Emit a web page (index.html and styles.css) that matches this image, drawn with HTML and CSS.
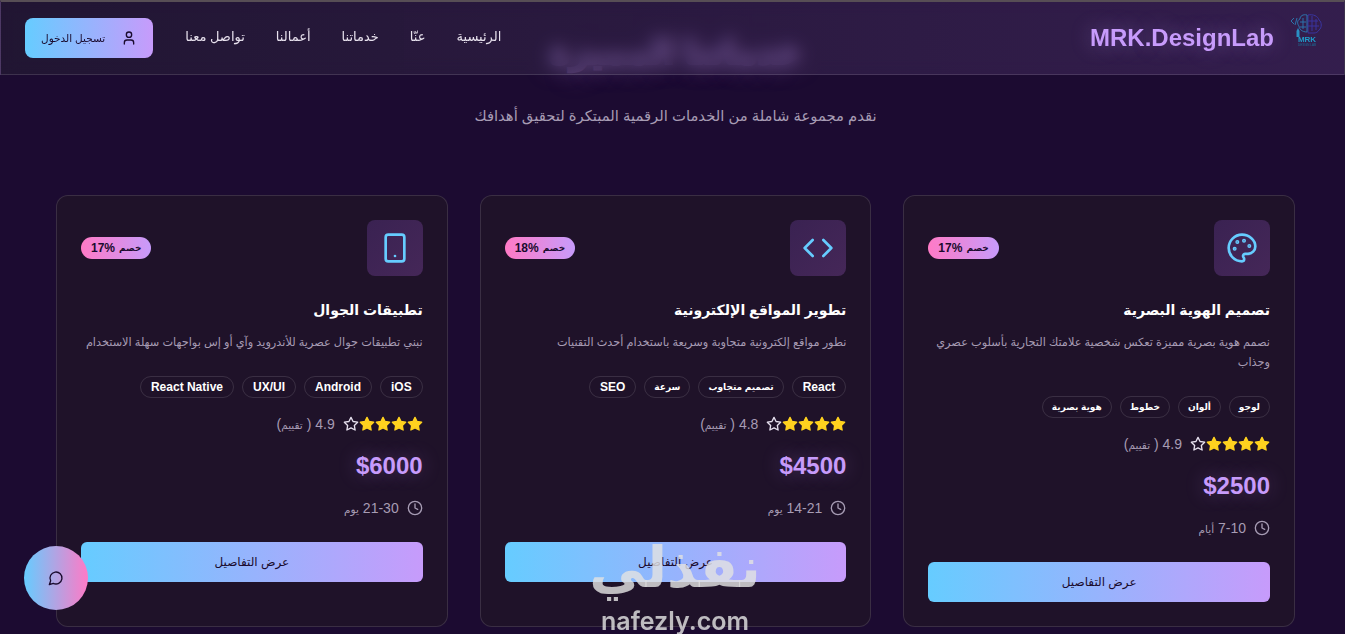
FILE: index.html
```html
<!DOCTYPE html>
<html lang="ar" dir="rtl">
<head>
  <meta charset="UTF-8" />
  <meta name="viewport" content="width=device-width, initial-scale=1.0" />
  <title>MRK.DesignLab | خدماتنا</title>
  <link rel="stylesheet" href="styles.css">
</head>

<body>
  <svg class="sprite" aria-hidden="true">
    <symbol id="i-palette" viewBox="0 0 24 24">
      <circle cx="13.5" cy="6.5" r=".5" fill="currentColor" />
      <circle cx="17.5" cy="10.5" r=".5" fill="currentColor" />
      <circle cx="8.5" cy="7.5" r=".5" fill="currentColor" />
      <circle cx="6.5" cy="12.5" r=".5" fill="currentColor" />
      <path d="M12 2C6.5 2 2 6.5 2 12s4.5 10 10 10c.926 0 1.648-.746 1.648-1.688 0-.437-.18-.835-.437-1.125-.29-.289-.438-.652-.438-1.125a1.64 1.64 0 0 1 1.668-1.668h1.996c3.051 0 5.555-2.503 5.555-5.554C21.965 6.012 17.461 2 12 2z" />
    </symbol>
    <symbol id="i-code" viewBox="0 0 24 24">
      <polyline points="16 18 22 12 16 6" />
      <polyline points="8 6 2 12 8 18" />
    </symbol>
    <symbol id="i-phone" viewBox="0 0 24 24">
      <rect x="5" y="2" width="14" height="20" rx="2" />
      <path d="M12 18h.01" />
    </symbol>
    <symbol id="i-star" viewBox="0 0 24 24">
      <polygon points="12 2 15.09 8.26 22 9.27 17 14.14 18.18 21.02 12 17.77 5.82 21.02 7 14.14 2 9.27 8.91 8.26 12 2" />
    </symbol>
    <symbol id="i-clock" viewBox="0 0 24 24">
      <circle cx="12" cy="12" r="10" />
      <polyline points="12 6 12 12 16 14" />
    </symbol>
    <symbol id="i-user" viewBox="0 0 24 24">
      <path d="M19 21v-2a4 4 0 0 0-4-4H9a4 4 0 0 0-4 4v2" />
      <circle cx="12" cy="7" r="4" />
    </symbol>
    <symbol id="i-chat" viewBox="0 0 24 24">
      <path d="M7.9 20A9 9 0 1 0 4 16.1L2 22Z" />
    </symbol>
  </svg>

  <header class="site-header">
    <a class="brand" href="#">
      <svg class="brand-logo" viewBox="0 0 35 34" aria-hidden="true">
        <g fill="none" stroke="#3a35a0" stroke-width="1">
          <path d="M21 2c5-1 10 1 11 5 3 2 3 8 0 10-1 2-3 3-5 3h-6z" />
          <path d="M25 3v15M29 6v11M21 8h10M21 13h11" />
        </g>
        <g fill="none" stroke="#2c74ac" stroke-width="1">
          <path d="M20 2c-4-1-7 1-7 4-3 1-3 5-1 7 0 3 3 6 8 6z" />
          <path d="M16 5v11M13 9h6M13 14h6" />
          <path d="M4 8l3-3M4 8l3 3M10 5l-2 7" />
        </g>
        <path d="M11 15l-1.5 3v6h3v-6z" fill="#2a8fc4" />
        <text class="brand-logo-text" x="20" y="29" text-anchor="middle">MRK</text>
        <text class="brand-logo-sub" x="20" y="33" text-anchor="middle">DESIGN LAB</text>
      </svg>
      <span class="brand-name">MRK.DesignLab</span>
    </a>
    <div class="header-end">
      <nav class="main-nav">
        <a href="#">الرئيسية</a>
        <a href="#">عنّا</a>
        <a href="#">خدماتنا</a>
        <a href="#">أعمالنا</a>
        <a href="#">تواصل معنا</a>
      </nav>
      <a class="login-button" href="#">
        <svg class="icon"><use href="#i-user" /></svg>
        <span>تسجيل الدخول</span>
      </a>
    </div>
  </header>

  <main class="services">
    <h2 class="services-title">خدماتنا المميزة</h2>
    <p class="services-lead">نقدم مجموعة شاملة من الخدمات الرقمية المبتكرة لتحقيق أهدافك</p>

    <div class="card-grid">
      <article class="card">
        <div class="card-top">
          <div class="card-icon"><svg><use href="#i-palette" /></svg></div>
          <span class="discount"><span class="ar">خصم</span> 17%</span>
        </div>
        <h3>تصميم الهوية البصرية</h3>
        <p class="card-text">نصمم هوية بصرية مميزة تعكس شخصية علامتك التجارية بأسلوب عصري وجذاب</p>
        <ul class="tags">
          <li class="ar">لوجو</li>
          <li class="ar">ألوان</li>
          <li class="ar">خطوط</li>
          <li class="ar">هوية بصرية</li>
        </ul>
        <div class="rating">
          <span class="stars">
            <svg class="star"><use href="#i-star" /></svg>
            <svg class="star"><use href="#i-star" /></svg>
            <svg class="star"><use href="#i-star" /></svg>
            <svg class="star"><use href="#i-star" /></svg>
            <svg class="star empty"><use href="#i-star" /></svg>
          </span>
          <span>4.9 ( <span class="ar">تقييم</span>)</span>
        </div>
        <div class="price">$2500</div>
        <div class="duration">
          <svg class="icon"><use href="#i-clock" /></svg>
          <span>7-10 <span class="ar">أيام</span></span>
        </div>
        <a class="details-button" href="#">عرض التفاصيل</a>
      </article>

      <article class="card">
        <div class="card-top">
          <div class="card-icon"><svg><use href="#i-code" /></svg></div>
          <span class="discount"><span class="ar">خصم</span> 18%</span>
        </div>
        <h3>تطوير المواقع الإلكترونية</h3>
        <p class="card-text">نطور مواقع إلكترونية متجاوبة وسريعة باستخدام أحدث التقنيات</p>
        <ul class="tags">
          <li>React</li>
          <li class="ar">تصميم متجاوب</li>
          <li class="ar">سرعة</li>
          <li>SEO</li>
        </ul>
        <div class="rating">
          <span class="stars">
            <svg class="star"><use href="#i-star" /></svg>
            <svg class="star"><use href="#i-star" /></svg>
            <svg class="star"><use href="#i-star" /></svg>
            <svg class="star"><use href="#i-star" /></svg>
            <svg class="star empty"><use href="#i-star" /></svg>
          </span>
          <span>4.8 ( <span class="ar">تقييم</span>)</span>
        </div>
        <div class="price">$4500</div>
        <div class="duration">
          <svg class="icon"><use href="#i-clock" /></svg>
          <span>14-21 <span class="ar">يوم</span></span>
        </div>
        <a class="details-button" href="#">عرض التفاصيل</a>
      </article>

      <article class="card">
        <div class="card-top">
          <div class="card-icon"><svg><use href="#i-phone" /></svg></div>
          <span class="discount"><span class="ar">خصم</span> 17%</span>
        </div>
        <h3>تطبيقات الجوال</h3>
        <p class="card-text">نبني تطبيقات جوال عصرية للأندرويد وآي أو إس بواجهات سهلة الاستخدام</p>
        <ul class="tags">
          <li>iOS</li>
          <li>Android</li>
          <li>UX/UI</li>
          <li>React Native</li>
        </ul>
        <div class="rating">
          <span class="stars">
            <svg class="star"><use href="#i-star" /></svg>
            <svg class="star"><use href="#i-star" /></svg>
            <svg class="star"><use href="#i-star" /></svg>
            <svg class="star"><use href="#i-star" /></svg>
            <svg class="star empty"><use href="#i-star" /></svg>
          </span>
          <span>4.9 ( <span class="ar">تقييم</span>)</span>
        </div>
        <div class="price">$6000</div>
        <div class="duration">
          <svg class="icon"><use href="#i-clock" /></svg>
          <span>21-30 <span class="ar">يوم</span></span>
        </div>
        <a class="details-button" href="#">عرض التفاصيل</a>
      </article>
    </div>
  </main>

  <button class="chat-button" aria-label="chat">
    <svg class="icon"><use href="#i-chat" /></svg>
  </button>

  <div class="watermark" aria-hidden="true">
    <span class="watermark-ar">نفذلي</span>
    <span class="watermark-en">nafezly.com</span>
  </div>
</body>
</html>
```

FILE: styles.css
```css
:root {
  --bg-color: #1c0b31;
  --card-bg: #1f1229;
  --border-color: rgba(255, 255, 255, 0.12);
  --text-color: #ffffff;
  --muted-color: #a79cb4;
  --purple: #c79bfb;
  --blue: #66ccff;
  --pink: #ff7ac6;
  --dark: #1a0b2e;
}

* {
  box-sizing: border-box;
}

body {
  font-family: 'Liberation Sans', 'DejaVu Sans', sans-serif;
  background-color: var(--bg-color);
  color: var(--text-color);
  margin: 0;
  padding: 0;
}

a {
  color: inherit;
  text-decoration: none;
}

.sprite {
  display: none;
}

.icon,
.star,
.card-icon svg {
  fill: none;
  stroke: currentColor;
  stroke-width: 2;
  stroke-linecap: round;
  stroke-linejoin: round;
}

.icon {
  width: 16px;
  height: 16px;
  flex-shrink: 0;
}

/* header sits over the page, the section title blurs behind it */
.site-header {
  position: fixed;
  top: 0;
  left: 0;
  right: 0;
  z-index: 10;
  height: 75px;
  padding: 0 22px 0 24px;
  display: flex;
  align-items: center;
  justify-content: space-between;
  background: linear-gradient(to left, rgba(62, 38, 90, 0.7), rgba(36, 26, 52, 0.72));
  border: 1px solid rgba(255, 255, 255, 0.12);
  border-top: 2px solid #574e55;
  backdrop-filter: blur(8px);
}

.brand {
  display: flex;
  align-items: center;
  gap: 13px;
}

.brand-logo {
  width: 35px;
  height: 34px;
  margin-bottom: 16px;
}

.brand-logo-text {
  font-size: 8px;
  font-weight: bold;
  fill: #1f9bc9;
}

.brand-logo-sub {
  font-size: 3px;
  fill: #1b6f96;
}

.brand-name {
  font-size: 24px;
  font-weight: bold;
  color: var(--purple);
  text-shadow: 0 0 20px rgba(199, 155, 251, 0.35);
}

.header-end {
  display: flex;
  align-items: center;
  gap: 32px;
}

.main-nav {
  display: flex;
  gap: 31px;
  margin-bottom: 3px;
  font-size: 13px;
  color: #e8e2ee;
}

.login-button {
  display: flex;
  align-items: center;
  gap: 16px;
  height: 40px;
  padding: 0 16px;
  border-radius: 8px;
  font-size: 10.5px;
  color: var(--dark);
  background: linear-gradient(to left, var(--purple), var(--blue));
}

.services {
  padding: 28px 50px 8px 56px;
}

.services-title {
  margin: 0;
  font-size: 34px;
  line-height: 48px;
  text-align: center;
  color: var(--purple);
  -webkit-text-stroke: 2px var(--purple);
  text-shadow: 0 0 24px rgba(199, 155, 251, 0.55);
}

.services-lead {
  margin: 28px 0 0;
  font-size: 14.8px;
  line-height: 24px;
  text-align: center;
  color: var(--muted-color);
}

.card-grid {
  display: grid;
  grid-template-columns: repeat(3, 1fr);
  gap: 32px;
  margin-top: 67px;
}

.card {
  background: var(--card-bg);
  border: 1px solid var(--border-color);
  border-radius: 12px;
  padding: 24px;
}

.card-top {
  display: flex;
  align-items: center;
  justify-content: space-between;
}

.card-icon {
  width: 56px;
  height: 56px;
  border-radius: 8px;
  display: flex;
  align-items: center;
  justify-content: center;
  color: var(--blue);
  background: linear-gradient(135deg, #3a2252, #452758);
}

.card-icon svg {
  width: 32px;
  height: 32px;
}

.discount {
  height: 22px;
  padding: 0 10px;
  border-radius: 999px;
  display: flex;
  align-items: center;
  gap: 4px;
  font-size: 12px;
  font-weight: bold;
  color: var(--dark);
  background: linear-gradient(to left, var(--purple), var(--pink));
}

.discount .ar {
  font-size: 9px;
}

.card h3 {
  margin: 22px 0 0;
  font-size: 14px;
  line-height: 24px;
}

.card-text {
  margin: 10px 0 0;
  font-size: 11.3px;
  line-height: 20px;
  color: var(--muted-color);
}

.tags {
  display: flex;
  flex-wrap: wrap;
  gap: 8px;
  list-style: none;
  margin: 24px 0 0;
  padding: 0;
}

.tags li {
  height: 22px;
  padding: 0 10px;
  border: 1px solid var(--border-color);
  border-radius: 999px;
  display: flex;
  align-items: center;
  font-size: 12px;
  font-weight: bold;
}

.tags li.ar {
  padding: 0 9px;
  font-size: 9px;
}

.rating {
  display: flex;
  align-items: center;
  gap: 8px;
  margin-top: 18px;
  font-size: 14px;
  color: var(--muted-color);
}

.rating .ar,
.duration .ar {
  font-size: 10.5px;
}

.stars {
  display: flex;
}

.star {
  width: 16px;
  height: 16px;
  color: #ffd21f;
  fill: #ffd21f;
}

.star.empty {
  color: #e6e0ee;
  fill: none;
}

.price {
  margin-top: 18px;
  font-size: 24px;
  line-height: 32px;
  font-weight: bold;
  color: var(--purple);
  text-shadow: 0 0 20px rgba(199, 155, 251, 0.3);
}

.duration {
  display: flex;
  align-items: center;
  gap: 8px;
  margin-top: 18px;
  font-size: 14px;
  color: var(--muted-color);
}

.details-button {
  display: flex;
  align-items: center;
  justify-content: center;
  height: 40px;
  margin-top: 26px;
  border-radius: 6px;
  font-size: 12px;
  color: var(--dark);
  background: linear-gradient(to left, var(--purple), var(--blue));
}

.chat-button {
  position: fixed;
  left: 24px;
  bottom: 24px;
  z-index: 20;
  width: 64px;
  height: 64px;
  padding: 0;
  border: none;
  border-radius: 50%;
  display: flex;
  align-items: center;
  justify-content: center;
  color: var(--dark);
  background: linear-gradient(to right, var(--blue), var(--pink));
}

.watermark {
  position: fixed;
  left: 590px;
  top: 534px;
  z-index: 30;
  width: 170px;
  display: flex;
  flex-direction: column;
  align-items: center;
  color: rgba(226, 226, 226, 0.82);
  pointer-events: none;
}

.watermark-ar {
  font-size: 56px;
  line-height: 68px;
  font-weight: bold;
}

.watermark-en {
  font-family: Inter, sans-serif;
  font-size: 25px;
  line-height: 26px;
  font-weight: 600;
  margin-top: 6px;
}
```
